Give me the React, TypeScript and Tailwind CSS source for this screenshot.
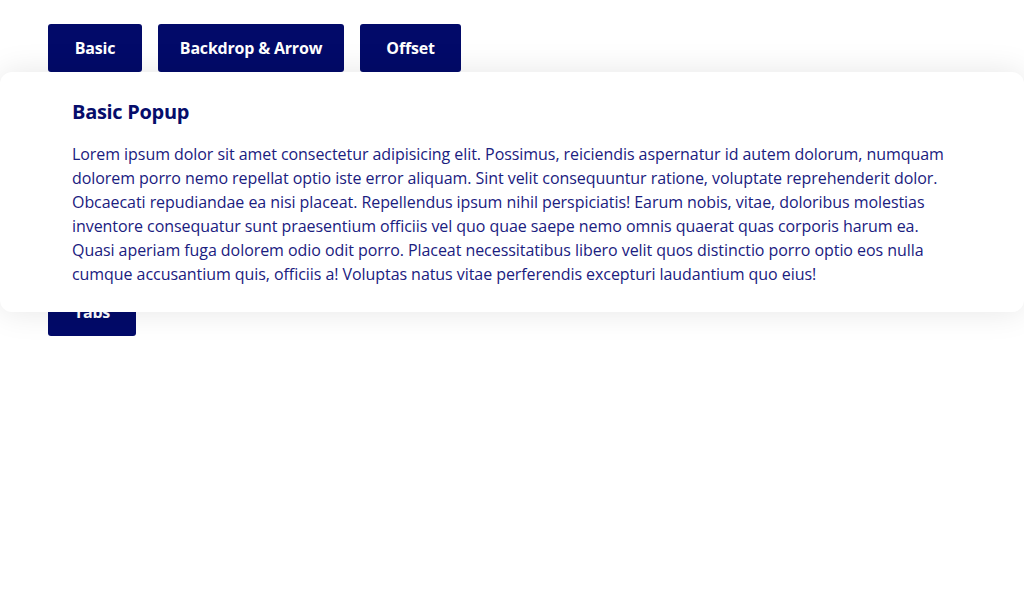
import React from 'react';

const font = { fontFamily: '"Open Sans", "Noto Sans", sans-serif' };

function NavButton({ label, w }: { label: string; w: string }) {
  return (
    <button className={`h-12 ${w} rounded-[3px] bg-[#020a69] text-white text-[16px] font-bold tracking-[-0.2px]`}>
      {label}
    </button>
  );
}

const lines = [
  'Lorem ipsum dolor sit amet consectetur adipisicing elit. Possimus, reiciendis aspernatur id autem dolorum, numquam',
  'dolorem porro nemo repellat optio iste error aliquam. Sint velit consequuntur ratione, voluptate reprehenderit dolor.',
  'Obcaecati repudiandae ea nisi placeat. Repellendus ipsum nihil perspiciatis! Earum nobis, vitae, doloribus molestias',
  'inventore consequatur sunt praesentium officiis vel quo quae saepe nemo omnis quaerat quas corporis harum ea.',
  'Quasi aperiam fuga dolorem odio odit porro. Placeat necessitatibus libero velit quos distinctio porro optio eos nulla',
  'cumque accusantium quis, officiis a! Voluptas natus vitae perferendis excepturi laudantium quo eius!',
];

export default function App() {
  return (
    <div className="relative min-h-[598px] bg-white" style={font}>
      {/* button rows */}
      <div className="px-12 pt-6">
        <div className="flex gap-4">
          <NavButton label="Basic" w="w-[94px]" />
          <NavButton label="Backdrop & Arrow" w="w-[186px]" />
          <NavButton label="Offset" w="w-[101px]" />
        </div>
        <div className="flex gap-4 mt-[216px]">
          <NavButton label="Tabs" w="w-[88px]" />
        </div>
      </div>

      {/* popup */}
      <div className="absolute left-0 right-0 top-[72px] h-[240px] bg-white rounded-xl shadow-[0_0_32px_rgba(0,0,0,0.1)] px-[72px] pt-[26px]">
        <h2 className="text-[20px] font-bold text-[#060d6b] leading-7 tracking-[-0.3px]">Basic Popup</h2>
        <p className="mt-[16px] text-[16px] leading-6 text-[#1a2080] tracking-[-0.06px] whitespace-nowrap">
          {lines.map((l) => (
            <span key={l} className="block">{l}</span>
          ))}
        </p>
      </div>
    </div>
  );
}
